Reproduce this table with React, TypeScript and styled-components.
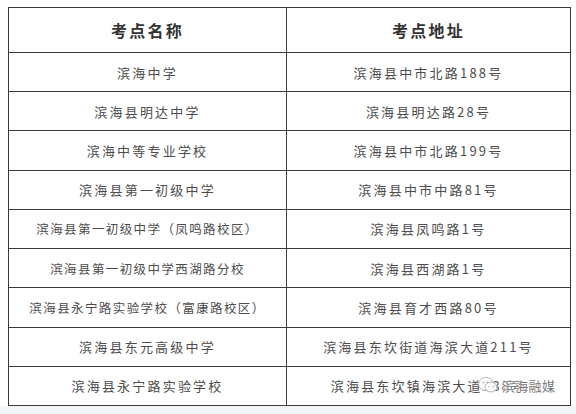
import React from 'react';
import styled, { createGlobalStyle } from 'styled-components';

const GlobalStyle = createGlobalStyle`
  html, body {
    margin: 0;
    padding: 0;
    background: #ffffff;
  }
  body {
    width: 576px;
    height: 414px;
    overflow: hidden;
    font-family: "Noto Sans CJK SC", "Noto Sans", sans-serif;
  }
`;

const Page = styled.div`
  position: relative;
  width: 576px;
  height: 414px;
  display: flex;
  flex-direction: column;
  background: #ffffff;
`;

const TableWrap = styled.div`
  padding: 7px 0 0 8px;
`;

const Table = styled.div`
  display: grid;
  grid-template-columns: 278px 284px;
  grid-template-rows: 45px repeat(9, 1fr);
  width: 563px;
  height: 399px;
  box-sizing: border-box;
  border-left: 1px solid #3a3a3a;
  border-top: 1px solid #3a3a3a;
`;

const Cell = styled.div<{ $head?: boolean; $small?: boolean }>`
  display: flex;
  align-items: center;
  justify-content: center;
  border-right: 1px solid #3a3a3a;
  border-bottom: 1px solid #3a3a3a;
  color: ${(p) => (p.$head ? '#333333' : '#4d4d4d')};
  font-size: ${(p) => (p.$head ? '16px' : p.$small ? '12.5px' : '13px')};
  font-weight: ${(p) => (p.$head ? 700 : 400)};
  letter-spacing: ${(p) => (p.$head ? '2.2px' : p.$small ? '1.4px' : '2.2px')};
  white-space: nowrap;
`;

const BottomStrip = styled.div`
  flex: 1;
  background: #f3f6f9;
`;

const Watermark = styled.div`
  position: absolute;
  left: 477px;
  top: 375px;
  display: flex;
  align-items: center;
  gap: 3px;
  color: #7a7a7a;
  font-size: 13px;
  letter-spacing: 0.3px;
  text-shadow: 0 0 2px #ffffff, 0 0 2px #ffffff, 0 0 3px #ffffff;
`;

const rows: [string, string, boolean?][] = [
  ['滨海中学', '滨海县中市北路188号'],
  ['滨海县明达中学', '滨海县明达路28号'],
  ['滨海中等专业学校', '滨海县中市北路199号'],
  ['滨海县第一初级中学', '滨海县中市中路81号'],
  ['滨海县第一初级中学（凤鸣路校区）', '滨海县凤鸣路1号', true],
  ['滨海县第一初级中学西湖路分校', '滨海县西湖路1号', true],
  ['滨海县永宁路实验学校（富康路校区）', '滨海县育才西路80号', true],
  ['滨海县东元高级中学', '滨海县东坎街道海滨大道211号'],
  ['滨海县永宁路实验学校', '滨海县东坎镇海滨大道188号'],
];

function WechatMark() {
  return (
    <svg width="22" height="20" viewBox="0 0 22 20">
      <ellipse cx="9" cy="9" rx="7.5" ry="6.5" fill="rgba(255,255,255,0.85)" stroke="#b5b5b5" strokeWidth="1" />
      <ellipse cx="14" cy="12" rx="6" ry="5" fill="rgba(255,255,255,0.85)" stroke="#b5b5b5" strokeWidth="1" />
      <circle cx="6.5" cy="7.5" r="0.9" fill="#b5b5b5" />
      <circle cx="11" cy="7.5" r="0.9" fill="#b5b5b5" />
      <circle cx="12" cy="11.5" r="0.7" fill="#b5b5b5" />
      <circle cx="16" cy="11.5" r="0.7" fill="#b5b5b5" />
    </svg>
  );
}

export default function App() {
  return (
    <Page>
      <GlobalStyle />
      <TableWrap>
        <Table>
          <Cell $head>考点名称</Cell>
          <Cell $head>考点地址</Cell>
          {rows.map(([name, addr, small]) => (
            <React.Fragment key={name}>
              <Cell $small={small}>{name}</Cell>
              <Cell>{addr}</Cell>
            </React.Fragment>
          ))}
        </Table>
      </TableWrap>
      <BottomStrip />
      <Watermark>
        <WechatMark />
        <span>滨海融媒</span>
      </Watermark>
    </Page>
  );
}
